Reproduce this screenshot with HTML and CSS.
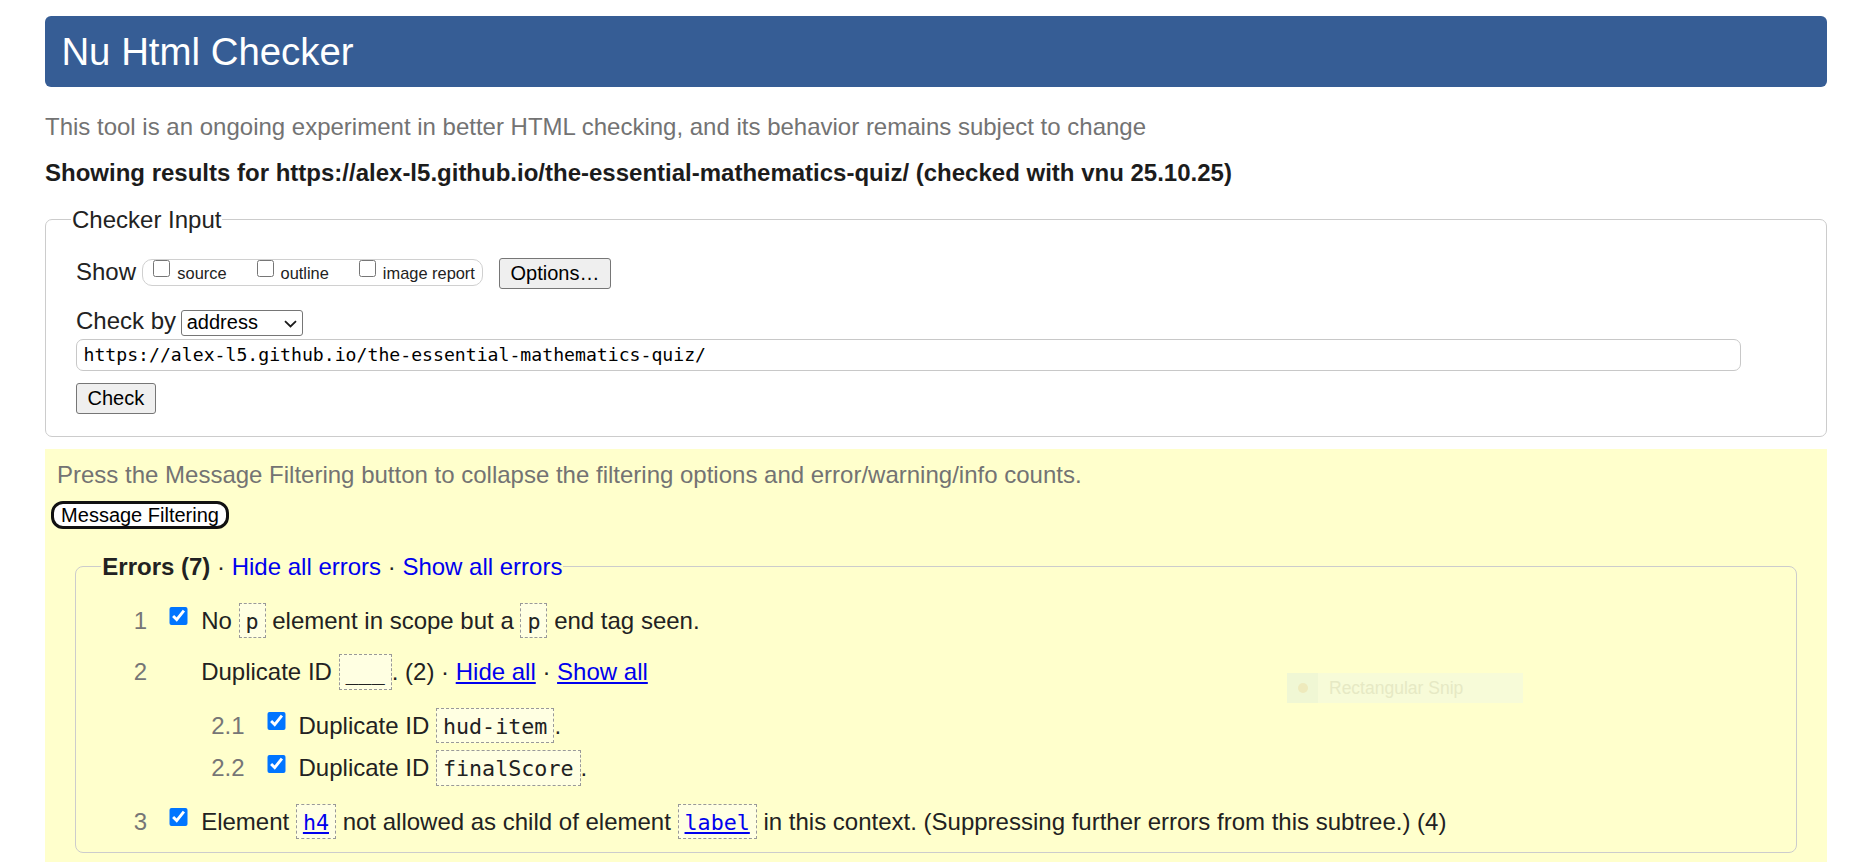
FILE: index.html
```html
<!DOCTYPE html>
<html lang="en">
<head>
<meta charset="utf-8">
<title>Showing results for https://alex-l5.github.io/the-essential-mathematics-quiz/ - Nu Html Checker</title>
<link rel="stylesheet" href="styles.css">
</head>
<body>
<h1 class="banner">Nu Html Checker</h1>
<p class="intro">This tool is an ongoing experiment in better HTML checking, and its behavior remains subject to change</p>
<p class="showing">Showing results for https://alex-l5.github.io/the-essential-mathematics-quiz/ (checked with vnu 25.10.25)</p>

<form class="checker">
  <fieldset class="box input-box">
    <legend class="legend">Checker Input</legend>
    <div class="row">
      <span class="row-label">Show</span>
      <span class="opts">
        <label class="opt"><input type="checkbox" class="cb-small"><span class="opt-text">source</span></label>
        <label class="opt"><input type="checkbox" class="cb-small"><span class="opt-text">outline</span></label>
        <label class="opt"><input type="checkbox" class="cb-small"><span class="opt-text">image report</span></label>
      </span>
      <button type="button" class="btn btn-options">Options…</button>
    </div>
    <div class="row row-by">
      <label class="row-label" for="docselect">Check by</label>
      <span class="select-wrap">
        <select id="docselect" class="select"><option>address</option></select>
        <svg class="chev" width="13" height="8" viewBox="0 0 13 8" aria-hidden="true"><path d="M1 1.2l5.5 5.3L12 1.2" fill="none" stroke="#1a1a1a" stroke-width="1.8"/></svg>
      </span>
    </div>
    <input class="url" type="url" value="https://alex-l5.github.io/the-essential-mathematics-quiz/">
    <div class="row-submit"><button type="button" class="btn">Check</button></div>
  </fieldset>
</form>

<section class="results">
  <p class="hint">Press the Message Filtering button to collapse the filtering options and error/warning/info counts.</p>
  <button type="button" class="btn-filter">Message Filtering</button>

  <fieldset class="box errors">
    <legend class="legend"><strong>Errors (7)</strong> · <a class="plain-link" href="#">Hide all errors</a> · <a class="plain-link" href="#">Show all errors</a></legend>
    <ol class="msgs">
      <li class="msg">
        <span class="num">1</span>
        <span class="slot"><input type="checkbox" class="cb" checked></span>
        <div class="body"><p class="text">No <code>p</code> element in scope but a <code>p</code> end tag seen.</p></div>
      </li>
      <li class="msg">
        <span class="num">2</span>
        <span class="slot"></span>
        <div class="body">
          <p class="text">Duplicate ID <code>___</code>. (2) · <a href="#">Hide all</a> · <a href="#">Show all</a></p>
          <ol class="msgs sub">
            <li class="msg">
              <span class="num">2.1</span>
              <span class="slot"><input type="checkbox" class="cb" checked></span>
              <div class="body"><p class="text">Duplicate ID <code>hud-item</code>.</p></div>
            </li>
            <li class="msg">
              <span class="num">2.2</span>
              <span class="slot"><input type="checkbox" class="cb" checked></span>
              <div class="body"><p class="text">Duplicate ID <code>finalScore</code>.</p></div>
            </li>
          </ol>
        </div>
      </li>
      <li class="msg">
        <span class="num">3</span>
        <span class="slot"><input type="checkbox" class="cb" checked></span>
        <div class="body"><p class="text">Element <code><a href="#">h4</a></code> not allowed as child of element <code><a href="#">label</a></code> in this context. (Suppressing further errors from this subtree.) (4)</p></div>
      </li>
    </ol>
  </fieldset>

  <div class="snip" aria-hidden="true">
    <span class="snip-icon"><span class="snip-dot"></span></span>
    <span class="snip-text">Rectangular Snip</span>
  </div>
</section>
</body>
</html>
```

FILE: styles.css
```css
* {
  box-sizing: border-box;
}

html {
  background: #ffffff;
}

body {
  margin: 0;
  padding: 16px 46px 0 45px;
  font-family: "Liberation Sans", Arial, sans-serif;
  font-size: 24px;
  line-height: 28px;
  color: #222222;
}

/* ---------- header ---------- */
.banner {
  margin: 0;
  padding: 14px 14px 13px 16.4px;
  font-size: 38.4px;
  line-height: 44px;
  font-weight: normal;
  color: #ffffff;
  background: #365d95;
  border-radius: 6px;
}

.intro {
  margin: 26.2px 0 0;
  color: #737373;
}

.showing {
  margin: 18.2px 0 0;
  font-weight: bold;
  color: #1c1c1c;
}

/* ---------- fieldsets ---------- */
.checker {
  margin: 18.6px 0 0;
}

.box {
  margin: 0;
  border: 1px solid #cccccc;
  border-radius: 7px;
  min-inline-size: 0;
}

.legend {
  padding: 0 1px;
  margin-left: -5px;
}

.input-box {
  padding: 23.7px 30px 21.7px;
}

.row {
  display: flex;
  align-items: flex-start;
}

.row-by {
  margin-top: 18.3px;
}

.opts {
  display: flex;
  gap: 30px;
  height: 26.7px;
  margin: 1.6px 0 0 6.3px;
  padding: 0 7.5px 0 10px;
  border: 1px solid #d0d0d0;
  border-radius: 10px;
}

.opt {
  display: flex;
  align-items: flex-start;
  gap: 7px;
  font-size: 16.4px;
  line-height: 26.6px;
}

.cb-small {
  width: 17px;
  height: 17px;
  margin: 0;
  flex: none;
}

.btn {
  height: 31px;
  padding: 3px 10.5px;
  font-family: "Liberation Sans", Arial, sans-serif;
  font-size: 20px;
  line-height: 23px;
  color: #000000;
  background: #efefef;
  border: 1px solid #767676;
  border-radius: 3px;
}

.btn-options {
  margin-left: 15.7px;
}

.select-wrap {
  position: relative;
  display: block;
  margin: 3.3px 0 0 4.7px;
}

.select {
  display: block;
  width: 122.6px;
  height: 25.4px;
  margin: 0;
  padding: 0 0 0 5px;
  font-family: "Liberation Sans", Arial, sans-serif;
  font-size: 20px;
  line-height: 23px;
  color: #000000;
  background: #ffffff;
  border: 1px solid #767676;
  border-radius: 3px;
  appearance: none;
  -webkit-appearance: none;
}

.chev {
  position: absolute;
  right: 6px;
  top: 9.5px;
  pointer-events: none;
}

.url {
  display: block;
  width: 1665px;
  height: 31.4px;
  margin: 3.6px 0 0;
  padding: 0 0 0 6.5px;
  font-family: "DejaVu Sans Mono", "Liberation Mono", monospace;
  font-size: 18.15px;
  color: #000000;
  background: #ffffff;
  border: 1px solid #c8c8c8;
  border-radius: 7px;
}

.row-submit {
  margin-top: 12.6px;
  display: flex;
}

/* ---------- results ---------- */
.results {
  position: relative;
  margin-top: 12.3px;
  padding: 12px 12px 9px;
  background: #ffffcc;
}

.hint {
  margin: 0;
  color: #737373;
}

.btn-filter {
  display: block;
  height: 28.6px;
  margin: 11.4px 0 0 -6.3px;
  padding: 0 7.4px;
  font-family: "Liberation Sans", Arial, sans-serif;
  font-size: 20px;
  line-height: 22.6px;
  color: #000000;
  background: #ffffff;
  border: 3px solid #111111;
  border-radius: 12px;
}

.errors {
  margin: 23.4px 18.3px 0;
  padding: 26.3px 30px 16.6px;
  border-radius: 8px;
}

.errors strong {
  font-weight: bold;
}

a {
  color: #0000ee;
}

.plain-link {
  text-decoration: none;
}

.msgs {
  list-style: none;
  margin: 0;
  padding: 0 0 0 27.5px;
}

.msg {
  display: flex;
  align-items: flex-start;
}

.msg + .msg {
  margin-top: 23.4px;
}

.sub {
  margin: 25.3px 0 1.9px;
  padding-left: 10px;
}

.sub .msg + .msg {
  margin-top: 14.7px;
}

.num {
  flex: none;
  margin-right: 22px;
  color: #767676;
}

.slot {
  flex: none;
  width: 19px;
  margin-right: 13px;
}

.cb {
  display: block;
  width: 19px;
  height: 18px;
  margin: 0.5px 0 0;
}

.body {
  flex: 1;
  min-width: 0;
}

.text {
  margin: 0;
}

code {
  font-family: "DejaVu Sans Mono", "Liberation Mono", monospace;
  font-size: 21.7px;
  line-height: 1;
  padding: 4.9px 6px 3.3px;
  border: 1px dashed #999999;
  background: #ffffe2;
}

/* ---------- screen-capture tooltip left in the shot ---------- */
.snip {
  position: absolute;
  left: 1242px;
  top: 223.7px;
  width: 235.7px;
  height: 30px;
  display: flex;
  background: #f7fbd8;
}

.snip-icon {
  width: 31px;
  display: flex;
  align-items: center;
  justify-content: center;
  background: #f0f7d4;
}

.snip-dot {
  width: 10px;
  height: 10px;
  border-radius: 50%;
  background: #eeeabc;
}

.snip-text {
  margin-left: 11px;
  font-size: 17.5px;
  line-height: 30px;
  color: #e6e9c4;
}
```
